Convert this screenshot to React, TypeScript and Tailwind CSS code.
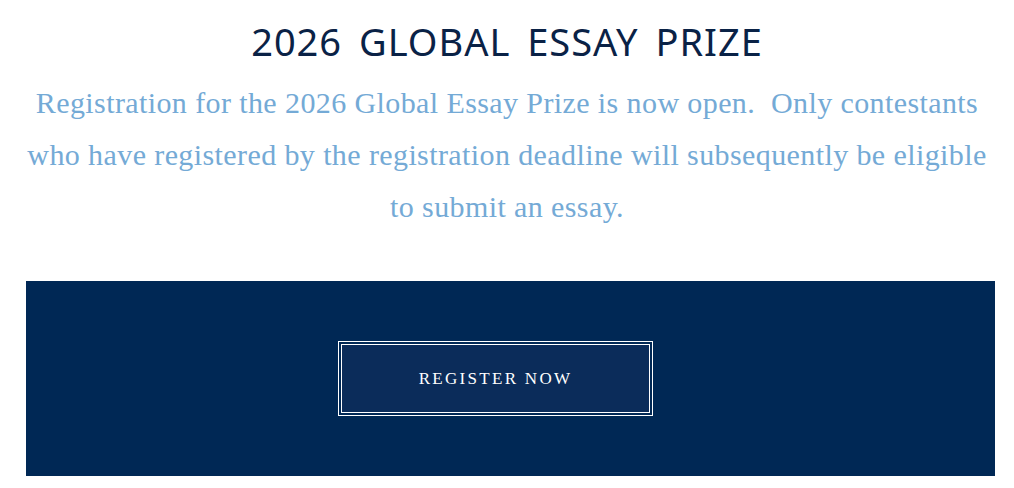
import React from "react";

const App: React.FC = () => {
    return (
        <div className="w-[1014px] h-[488px] bg-white flex flex-col items-center overflow-hidden">
            <h1 className="mt-[18px] text-[#0a2246] text-[38px] leading-[46px] tracking-[1px] [word-spacing:6px] whitespace-nowrap font-['Noto_Sans',sans-serif] font-normal">
                2026 GLOBAL ESSAY PRIZE
            </h1>
            <p className="mt-[13px] w-full text-center text-[#74aad6] text-[30px] leading-[52px] tracking-[0.4px] whitespace-nowrap font-['Liberation_Serif',serif]">
                Registration for the 2026 Global Essay Prize is now open.&nbsp; Only contestants
                <br />
                who have registered by the registration deadline will subsequently be eligible
                <br />
                to submit an essay.
            </p>
            <div className="mt-[48px] self-start ml-[26px] w-[969px] h-[195px] bg-[#002855] flex items-center justify-center pr-[30px]">
                <button className="w-[315px] h-[75px] border border-white p-[2px]">
                    <div className="w-full h-full border border-white bg-[#0b2c5a] flex items-center justify-center">
                        <span className="text-white text-[17px] tracking-[2.3px] font-['Liberation_Serif',serif]">
                            REGISTER NOW
                        </span>
                    </div>
                </button>
            </div>
        </div>
    );
};

export default App;
